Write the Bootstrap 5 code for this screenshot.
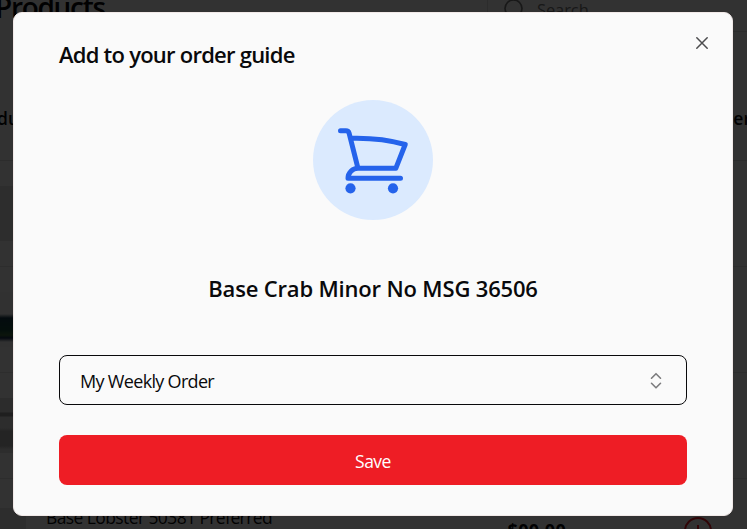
<!DOCTYPE html>
<html lang="en">
<head>
<meta charset="utf-8">
<meta name="viewport" content="width=device-width, initial-scale=1">
<title>Add to your order guide</title>
<link href="https://cdn.jsdelivr.net/npm/bootstrap@5.3.0/dist/css/bootstrap.min.css" rel="stylesheet">
<style>
body{font-family:"Open Sans","Noto Sans",sans-serif;font-size:18px;color:#09090b;background:#fafafa;height:529px}
.t{white-space:nowrap;line-height:1;display:inline-block}
.page-top{height:31px}
.page-title{font-size:28px;font-weight:600;margin:-7px 0 0 -5px;letter-spacing:-1.3px}
.search-box{width:260px;height:32px;border:solid #dcdcdc;border-width:0 0 1px 1px;color:#777;padding-left:16px}
.search-box svg{margin-top:-3px}
.search-box .t{font-size:16.5px;margin:2px 0 0 12px;letter-spacing:-.1px}
.tbl-head{height:130px;padding-top:79px;border-bottom:1px solid #d9d9d9;font-weight:600;font-size:17.5px}
.tbl-head .t:first-child{margin-left:-3px}
.tbl-head .t:last-child{margin-right:-4px}
.tbl-row{height:106px;padding-top:25px;border-bottom:1px solid #e2e2e2}
.thumb{width:26px;height:55px;background:#dedede}
.thumb-can{background:linear-gradient(#f3f3f3 0 22px,#163a4a 26px,#174a3c 38px,#3c6a3c 43px,#1c3050 46px,#f3f3f3 50px)}
.thumb-label{background:linear-gradient(#dadada 0 14px,#9b9b9b 15px 18px,#e0e0e0 19px 30px,#b5b5b5 33px 48px,#dedede 51px)}
.item-name{margin:5px 0 0 20px;font-size:17.5px;letter-spacing:-.6px}
.price{margin:17px 0 0;font-weight:700;font-size:18px;letter-spacing:.3px}
.add-ring{margin:13px 35px 0 118px}
.shade{background:rgba(0,0,0,.8)}
.dlg{width:720px;height:504px;margin:12px 0 0 13px;padding:30px 46px 0 45px;background:#fafafa;border-radius:9px;border:1px solid #f1e9e8}
.dlg-title{font-size:22px;font-weight:600;letter-spacing:-.76px;line-height:22px}
.x-btn{top:22px;right:22px;width:16px;height:16px}
.cart-disc{width:120px;height:120px;background:#dbeafe;margin-top:35px}
.item-title{font-size:22px;font-weight:600;margin-top:57px;padding-left:1px;line-height:22px;letter-spacing:-.17px}
.picker{height:50px;border:1px solid #09090b;border-radius:8px;margin:56px -1px 0 0;padding:2px 20px 0;font-size:18px;color:#09090b;background:#fafafa;letter-spacing:-.68px}
.save-btn,.save-btn:hover{height:50px;background:#ee1d25;color:#fff;border:0;border-radius:8px;margin:30px -1px 0 0;font-size:17.5px;padding:3px 0 0;letter-spacing:-.5px}
</style>
<script src="https://cdn.jsdelivr.net/npm/bootstrap@5.3.0/dist/js/bootstrap.bundle.min.js"></script>
</head>
<body class="overflow-hidden position-relative">
<main class="h-100 overflow-hidden">
  <div class="page-top d-flex justify-content-between align-items-start">
    <span class="t page-title">Products</span>
    <div class="search-box d-flex align-items-start">
      <svg width="21" height="24" viewBox="0 0 21 24" fill="none" stroke="currentColor" stroke-width="1.7"><circle cx="9.500" cy="11.500" r="8.500"/><path d="m15.500 17.500 4 4"/></svg>
      <span class="t">Search</span>
    </div>
  </div>
  <div class="tbl-head d-flex justify-content-between align-items-start"><span class="t">duct</span><span class="t">er</span></div>
  <div class="tbl-row"><div class="thumb"></div></div>
  <div class="tbl-row"><div class="thumb thumb-can"></div></div>
  <div class="tbl-row"><div class="thumb thumb-label"></div></div>
  <div class="tbl-row d-flex align-items-start">
    <div class="thumb mt-1"></div>
    <span class="t item-name">Base Lobster 50381 Preferred</span>
    <span class="t price ms-auto">$00.00</span>
    <svg class="flex-shrink-0 add-ring" width="28" height="28" viewBox="0 0 28 28" fill="none" stroke="#ee1d25" stroke-width="2"><circle cx="14" cy="14" r="13"/><path d="M14 8v12M8 14h12"/></svg>
  </div>
</main>
<div class="shade position-absolute top-0 start-0 w-100 h-100">
  <section class="dlg position-relative d-flex flex-column" role="dialog" aria-labelledby="dlgTitle">
    <button class="x-btn btn p-0 border-0 position-absolute d-flex" type="button" aria-label="Close"><svg width="16" height="16" viewBox="0 0 16 16" stroke="#4c4c4e" stroke-width="1.5" stroke-linecap="round"><path d="m2.800 2.800 10.400 10.400M13.200 2.800 2.800 13.200"/></svg></button>
    <h2 class="dlg-title mb-0" id="dlgTitle"><span class="t">Add to your order guide</span></h2>
    <div class="cart-disc rounded-circle align-self-center">
      <svg class="d-block" width="120" height="120" viewBox="0 0 120 120" fill="none" stroke="#2563eb" stroke-width="5" stroke-linecap="round" stroke-linejoin="round"><path d="M27.500 30.700h5.500c1.500 0 2.700 1 3.100 2.400L45 68.300M39 38.200c18.500-.4 36.500 1.500 53.200 6.300L82.800 68.300H45c-5.500 0-10 4.400-10 10h52.500"/><g fill="#2563eb" stroke="none"><circle cx="37.500" cy="88.300" r="5.100"/><circle cx="80" cy="88.300" r="5.100"/></g></svg>
    </div>
    <h3 class="item-title mb-0 text-center"><span class="t">Base Crab Minor No MSG 36506</span></h3>
    <button class="picker d-flex align-items-center justify-content-between" type="button"><span class="t">My Weekly Order</span>
      <svg width="20" height="20" viewBox="0 0 20 20" fill="none" stroke="#7c7c7e" stroke-width="1.6" stroke-linecap="round" stroke-linejoin="round"><path d="m5.500 7.200 4.500-4.500 4.500 4.500M5.500 12.300l4.500 4.500 4.500-4.500"/></svg>
    </button>
    <button class="save-btn btn" type="button"><span class="t">Save</span></button>
  </section>
</div>
</body>
</html>
